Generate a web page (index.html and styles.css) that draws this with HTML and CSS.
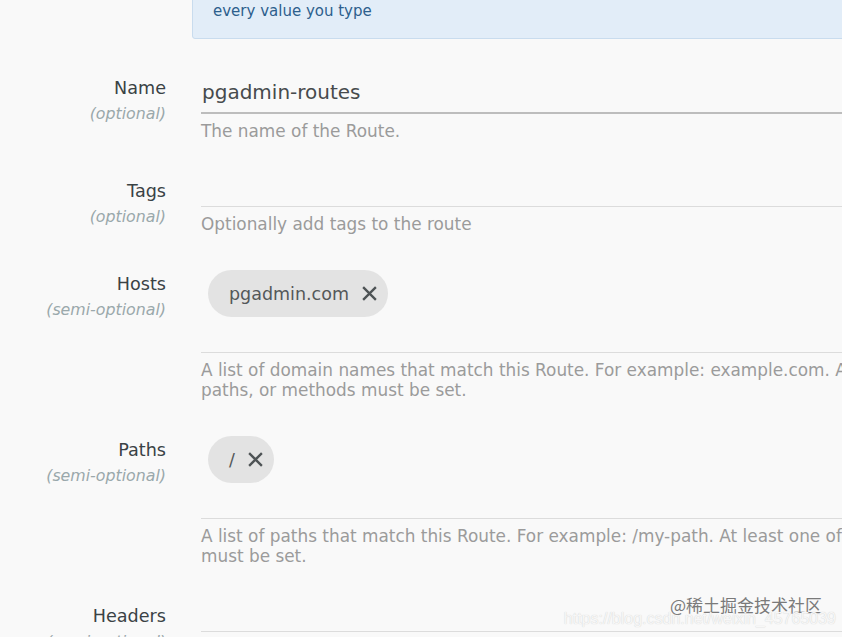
FILE: index.html
```html
<!DOCTYPE html>
<html lang="en">
<head>
    <meta charset="UTF-8">
    <meta name="viewport" content="width=device-width, initial-scale=1.0">
    <title>Create Route</title>
    <link rel="stylesheet" href="styles.css">
</head>
<body>
    <div class="page">
        <div class="notice">every value you type</div>

        <form class="route-form">
            <div class="form-row">
                <div class="label">
                    <div class="label-name">Name</div>
                    <div class="label-hint">(optional)</div>
                </div>
                <div class="field">
                    <input class="text-input" type="text" value="pgadmin-routes">
                    <div class="help">The name of the Route.</div>
                </div>
            </div>

            <div class="form-row">
                <div class="label">
                    <div class="label-name">Tags</div>
                    <div class="label-hint">(optional)</div>
                </div>
                <div class="field">
                    <div class="tag-input empty"></div>
                    <div class="help">Optionally add tags to the route</div>
                </div>
            </div>

            <div class="form-row">
                <div class="label">
                    <div class="label-name">Hosts</div>
                    <div class="label-hint">(semi-optional)</div>
                </div>
                <div class="field">
                    <div class="chips">
                        <span class="chip">pgadmin.com
                            <svg class="chip-close" viewBox="0 0 16 16"><path d="M2 2L14 14M14 2L2 14"/></svg>
                        </span>
                    </div>
                    <div class="tag-input"></div>
                    <div class="help">A list of domain names that match this Route. For example: example.com. At least one of hosts, paths, or methods must be set.</div>
                </div>
            </div>

            <div class="form-row">
                <div class="label">
                    <div class="label-name">Paths</div>
                    <div class="label-hint">(semi-optional)</div>
                </div>
                <div class="field">
                    <div class="chips">
                        <span class="chip">/
                            <svg class="chip-close" viewBox="0 0 16 16"><path d="M2 2L14 14M14 2L2 14"/></svg>
                        </span>
                    </div>
                    <div class="tag-input"></div>
                    <div class="help">A list of paths that match this Route. For example: /my-path. At least one of hosts, paths, or methods must be set.</div>
                </div>
            </div>

            <div class="form-row">
                <div class="label">
                    <div class="label-name">Headers</div>
                    <div class="label-hint">(semi-optional)</div>
                </div>
                <div class="field">
                    <div class="tag-input empty"></div>
                </div>
            </div>
        </form>
    </div>

    <div class="watermark">
        <div class="wm-brand">@稀土掘金技术社区</div>
        <div class="wm-url">https://blog.csdn.net/weixin_45765039</div>
    </div>
</body>
</html>
```

FILE: styles.css
```css
html, body {
    margin: 0;
    height: 100%;
    overflow: hidden;
}

body {
    background-color: #f9f9f9;
    font-family: 'DejaVu Sans', sans-serif;
    color: #3f4548;
}

.page {
    width: 1100px;
}

.notice {
    margin-left: 192px;
    margin-top: -20px;
    padding: 20px 20px 17px 20px;
    background-color: #e2edf8;
    border: 1px solid #c9dcee;
    border-radius: 3px;
    color: #2d5f8d;
    font-size: 15px;
    line-height: 20px;
}

.route-form {
    margin-top: 37px;
}

.form-row {
    display: grid;
    grid-template-columns: 166px 866px;
    column-gap: 35px;
    margin-bottom: 38px;
}

.label {
    text-align: right;
}

.label-name {
    font-size: 17.6px;
    line-height: 24px;
    color: #3a4245;
}

.label-hint {
    margin-top: 2px;
    font-size: 15.8px;
    line-height: 24px;
    font-style: italic;
    color: #9aa8ab;
}

.text-input {
    display: block;
    width: 100%;
    box-sizing: border-box;
    height: 38px;
    padding: 0 0 4px 1px;
    border: none;
    border-bottom: 2px solid #bdbdbd;
    background: transparent;
    font-family: inherit;
    font-size: 20px;
    color: #474b4d;
    outline: none;
}

.tag-input {
    height: 35px;
    border-bottom: 1px solid #dcdcdc;
}

.tag-input.empty {
    height: 27px;
}

.chips {
    display: flex;
    gap: 8px;
    margin-top: -2px;
    padding-left: 7px;
}

.chip {
    display: inline-flex;
    align-items: center;
    gap: 12px;
    height: 47px;
    padding: 0 10px 0 21px;
    border-radius: 24px;
    background-color: #e3e3e3;
    font-size: 17.5px;
    color: #545859;
}

.chip-close {
    width: 17px;
    height: 17px;
    fill: none;
    stroke: #4e5355;
    stroke-width: 2.2;
}

.help {
    margin-top: 7px;
    font-size: 16.9px;
    line-height: 20px;
    color: #9b9b9b;
}

.watermark {
    position: absolute;
    right: 6px;
    bottom: 8px;
    text-align: right;
}

.wm-brand {
    margin-right: 14px;
    font-family: 'Noto Sans CJK SC', sans-serif;
    font-size: 17px;
    line-height: 20px;
    color: #7a7a7a;
}

.wm-url {
    margin-top: -6px;
    font-family: 'Liberation Sans', sans-serif;
    font-size: 16px;
    line-height: 20px;
    color: #f7f7f7;
    text-shadow: 0 0 1px #c9c9c9;
}
```
